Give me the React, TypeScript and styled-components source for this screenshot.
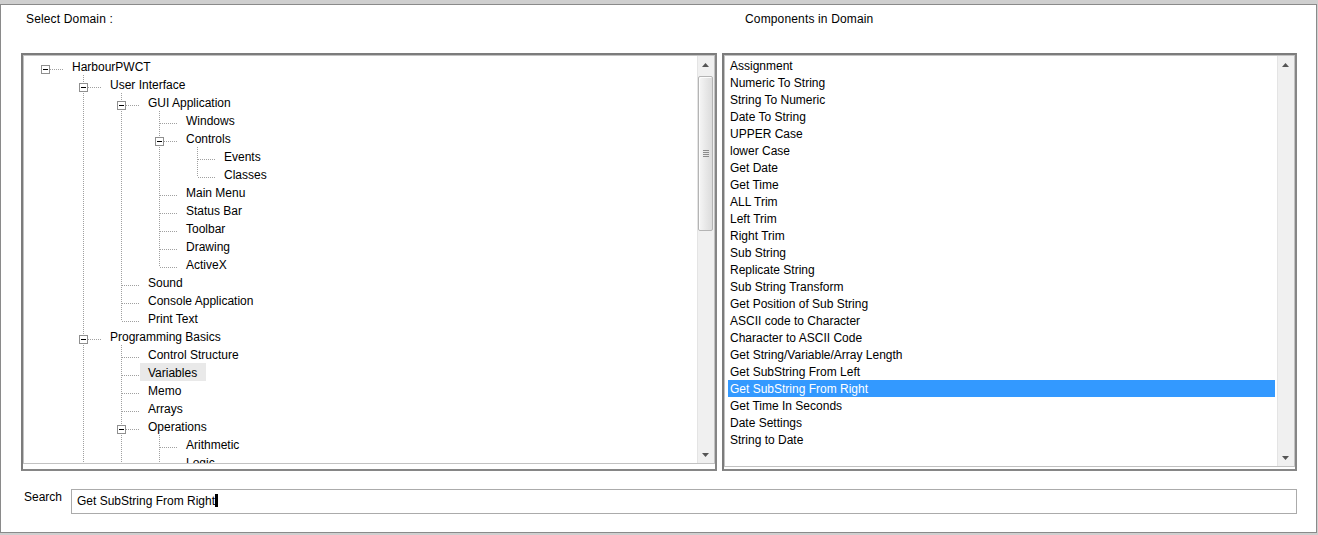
import React from "react";
import styled, { createGlobalStyle } from "styled-components";

const GlobalStyle = createGlobalStyle`
  html, body {
    margin: 0;
    padding: 0;
  }
  body {
    background: #cfcfcf;
    font-family: "Liberation Sans", Arial, sans-serif;
    font-size: 12px;
    color: #000;
    overflow: hidden;
  }
`;

const Window = styled.div`
  box-sizing: border-box;
  width: 1317px;
  height: 529px;
  margin-top: 4px;
  background: #fff;
  border: 1px solid #8a8a8a;
  display: flex;
  flex-direction: column;
`;

const Columns = styled.div`
  display: grid;
  grid-template-columns: 696px 575px;
  column-gap: 5px;
  padding-left: 20px;
`;

const Header = styled(Columns)`
  height: 48px;
  padding-top: 7px;
  box-sizing: border-box;
`;

const Caption = styled.div<{ $indent: number }>`
  padding-left: ${p => p.$indent}px;
  line-height: 15px;
  letter-spacing: 0.15px;
`;

const Panels = styled(Columns)`
  height: 418px;
`;

const Frame = styled.div<{ $gap: number }>`
  box-sizing: border-box;
  border: 2px solid #868686;
  border-top-color: #7c7c7c;
  border-left-color: #7c7c7c;
  padding-bottom: ${p => p.$gap}px;
  display: flex;
  min-height: 0;
`;

const Inset = styled.div`
  flex: 1;
  display: flex;
  border: 1px solid #c2c2c2;
  min-width: 0;
`;

const Content = styled.div`
  flex: 1;
  min-width: 0;
  overflow: hidden;
  padding-top: 1px;
`;

const ScrollBar = styled.div`
  width: 17px;
  flex: none;
  display: flex;
  flex-direction: column;
  background: #f0f0f0;
  box-shadow: inset 1px 0 0 #e4e4e4;
`;

const ScrollButton = styled.div`
  height: 17px;
  flex: none;
  display: flex;
  align-items: center;
  justify-content: center;
`;

const Track = styled.div`
  flex: 1;
`;

const Thumb = styled.div<{ $height: number }>`
  box-sizing: border-box;
  height: ${p => p.$height}px;
  margin: 3px 1px 0 1px;
  border: 1px solid #b4b4b4;
  border-radius: 2px;
  background: linear-gradient(to right, #f6f6f6, #e6e6e6 60%, #dcdcdc);
  box-shadow: inset 1px 1px 0 #fcfcfc;
  display: flex;
  align-items: center;
  justify-content: center;
`;

const TreeRow = styled.div`
  display: flex;
  height: 18px;
`;

const TreeLabel = styled.span<{ $hot?: boolean }>`
  padding: 0 9px 0 8px;
  height: 18px;
  line-height: 20px;
  white-space: nowrap;
  background: ${p => (p.$hot ? "#e9e9e9" : "transparent")};
`;

const ListItem = styled.div<{ $selected?: boolean }>`
  height: 17px;
  line-height: 19px;
  margin: 0 2px 0 3px;
  padding-left: 2px;
  white-space: nowrap;
  overflow: hidden;
  background: ${p => (p.$selected ? "#3399ff" : "transparent")};
  color: ${p => (p.$selected ? "#fff" : "#000")};
`;

const SearchRow = styled.div`
  display: flex;
  align-items: flex-start;
  margin-top: 18px;
  padding-left: 23px;
`;

const SearchLabel = styled.div`
  width: 47px;
  line-height: 15px;
  padding-top: 1px;
`;

const SearchBox = styled.div`
  box-sizing: border-box;
  width: 1226px;
  height: 25px;
  border: 1px solid #ababab;
  padding: 0 0 1px 5px;
  line-height: 22px;
  white-space: nowrap;
`;

const Caret = styled.span`
  display: inline-block;
  width: 3px;
  height: 13px;
  background: #000;
  vertical-align: -2px;
`;

type TreeNode = { label: string; hot?: boolean; children?: TreeNode[] };

const tree: TreeNode[] = [
  {
    label: "HarbourPWCT",
    children: [
      {
        label: "User Interface",
        children: [
          {
            label: "GUI Application",
            children: [
              { label: "Windows" },
              { label: "Controls", children: [{ label: "Events" }, { label: "Classes" }] },
              { label: "Main Menu" },
              { label: "Status Bar" },
              { label: "Toolbar" },
              { label: "Drawing" },
              { label: "ActiveX" }
            ]
          },
          { label: "Sound" },
          { label: "Console Application" },
          { label: "Print Text" }
        ]
      },
      {
        label: "Programming Basics",
        children: [
          { label: "Control Structure" },
          { label: "Variables", hot: true },
          { label: "Memo" },
          { label: "Arrays" },
          {
            label: "Operations",
            children: [{ label: "Arithmetic" }, { label: "Logic" }, { label: "Relational" }]
          },
          { label: "Procedures" }
        ]
      },
      { label: "Files" }
    ]
  }
];

type FlatRow = {
  label: string;
  level: number;
  open: boolean;
  hasNext: boolean;
  rails: boolean[];
  hot?: boolean;
};

const flatten = (nodes: TreeNode[], level: number, rails: boolean[], out: FlatRow[]) => {
  nodes.forEach((node, i) => {
    const hasNext = i < nodes.length - 1;
    out.push({ label: node.label, level, open: !!node.children, hasNext, rails, hot: node.hot });
    if (node.children) flatten(node.children, level + 1, [...rails, hasNext], out);
  });
  return out;
};

const rows = flatten(tree, 0, [], []);

const INDENT = 38;
const ORIGIN = 21;
const DOT = "#a0a0a0";

const Connector = ({ row }: { row: FlatRow }) => {
  const cx = ORIGIN + INDENT * row.level + 0.5;
  const width = ORIGIN + INDENT * row.level + 19;
  return (
    <svg width={width} height={18} shapeRendering="crispEdges" style={{ flex: "none" }}>
      {row.rails.map((on, k) =>
        on ? (
          <line key={k} x1={ORIGIN + INDENT * k + 0.5} y1={0} x2={ORIGIN + INDENT * k + 0.5} y2={18}
            stroke={DOT} strokeDasharray="1 1" />
        ) : null
      )}
      {row.level > 0 && <line x1={cx} y1={0} x2={cx} y2={12} stroke={DOT} strokeDasharray="1 1" />}
      {row.hasNext && <line x1={cx} y1={12} x2={cx} y2={18} stroke={DOT} strokeDasharray="1 1" />}
      <line x1={cx + 0.5} y1={12.5} x2={cx + 19.5} y2={12.5} stroke={DOT} strokeDasharray="1 1" />
      {row.open && (
        <g>
          <rect x={cx - 4} y={8.5} width={8} height={8} fill="#fff" stroke="#8f8f8f" />
          <line x1={cx - 2.5} y1={12.5} x2={cx + 2.5} y2={12.5} stroke="#000" />
        </g>
      )}
    </svg>
  );
};

const Arrow = ({ down }: { down?: boolean }) => (
  <svg width={7} height={4} viewBox="0 0 7 4">
    <polygon points={down ? "0,0 7,0 3.5,4" : "0,4 7,4 3.5,0"} fill="#555" />
  </svg>
);

const Grip = () => (
  <svg width={6} height={7} shapeRendering="crispEdges">
    {[0, 2, 4, 6].map(y => (
      <line key={y} x1={0} y1={y + 0.5} x2={6} y2={y + 0.5} stroke="#8c8c8c" />
    ))}
  </svg>
);

const components = [
  "Assignment",
  "Numeric To String",
  "String To Numeric",
  "Date To String",
  "UPPER Case",
  "lower Case",
  "Get Date",
  "Get Time",
  "ALL Trim",
  "Left Trim",
  "Right Trim",
  "Sub String",
  "Replicate String",
  "Sub String Transform",
  "Get Position of Sub String",
  "ASCII code to Character",
  "Character to ASCII Code",
  "Get String/Variable/Array Length",
  "Get SubString From Left",
  "Get SubString From Right",
  "Get Time In Seconds",
  "Date Settings",
  "String to Date"
];

const selected = "Get SubString From Right";

const App = () => (
  <>
    <GlobalStyle />
    <Window>
      <Header>
        <Caption $indent={5}>Select Domain :</Caption>
        <Caption $indent={23}>Components in Domain</Caption>
      </Header>
      <Panels>
        <Frame $gap={5}>
          <Inset>
            <Content>
              {rows.map((row, i) => (
                <TreeRow key={i}>
                  <Connector row={row} />
                  <TreeLabel $hot={row.hot}>{row.label}</TreeLabel>
                </TreeRow>
              ))}
            </Content>
            <ScrollBar>
              <ScrollButton><Arrow /></ScrollButton>
              <Track>
                <Thumb $height={155}><Grip /></Thumb>
              </Track>
              <ScrollButton><Arrow down /></ScrollButton>
            </ScrollBar>
          </Inset>
        </Frame>
        <Frame $gap={2}>
          <Inset>
            <Content>
              {components.map(name => (
                <ListItem key={name} $selected={name === selected}>{name}</ListItem>
              ))}
            </Content>
            <ScrollBar>
              <ScrollButton><Arrow /></ScrollButton>
              <Track />
              <ScrollButton><Arrow down /></ScrollButton>
            </ScrollBar>
          </Inset>
        </Frame>
      </Panels>
      <SearchRow>
        <SearchLabel>Search</SearchLabel>
        <SearchBox>
          Get SubString From Right<Caret />
        </SearchBox>
      </SearchRow>
    </Window>
  </>
);

export default App;
